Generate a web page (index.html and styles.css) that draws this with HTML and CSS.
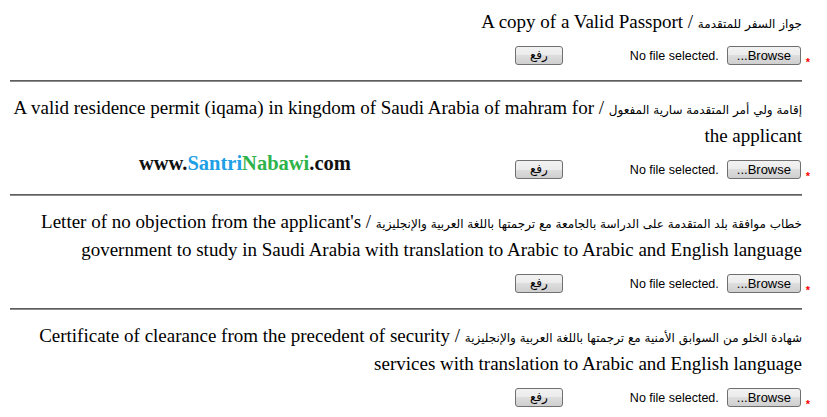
FILE: index.html
```html
<!DOCTYPE html>
<html lang="ar" dir="rtl">
<head>
    <meta charset="UTF-8">
    <title>المستندات المطلوبة</title>
    <link rel="stylesheet" href="styles.css">
</head>
<body>
    <div class="form">
        <div class="item">
            <div class="title"><span class="ar">جواز السفر للمتقدمة</span> / A copy of a Valid Passport</div>
            <div class="controls">
                <span class="req">*</span>
                <button class="btn browse">Browse...</button>
                <span class="status" dir="ltr">No file selected.</span>
                <button class="btn upload">رفع</button>
            </div>
        </div>
        <hr>
        <div class="item">
            <div class="title"><span class="ar">إقامة ولي أمر المتقدمة سارية المفعول</span> / A valid residence permit (iqama) in kingdom of Saudi Arabia of mahram for the applicant</div>
            <div class="controls">
                <span class="req">*</span>
                <button class="btn browse">Browse...</button>
                <span class="status" dir="ltr">No file selected.</span>
                <button class="btn upload">رفع</button>
            </div>
        </div>
        <hr>
        <div class="item">
            <div class="title"><span class="ar">خطاب موافقة بلد المتقدمة على الدراسة بالجامعة مع ترجمتها باللغة العربية والإنجليزية</span> / Letter of no objection from the applicant's government to study in Saudi Arabia with translation to Arabic to Arabic and English language</div>
            <div class="controls">
                <span class="req">*</span>
                <button class="btn browse">Browse...</button>
                <span class="status" dir="ltr">No file selected.</span>
                <button class="btn upload">رفع</button>
            </div>
        </div>
        <hr>
        <div class="item">
            <div class="title"><span class="ar">شهادة الخلو من السوابق الأمنية مع ترجمتها باللغة العربية والإنجليزية</span> / Certificate of clearance from the precedent of security services with translation to Arabic and English language</div>
            <div class="controls">
                <span class="req">*</span>
                <button class="btn browse">Browse...</button>
                <span class="status" dir="ltr">No file selected.</span>
                <button class="btn upload">رفع</button>
            </div>
        </div>

        <div class="watermark" dir="ltr">www.<span class="blue">Santri</span><span class="green">Nabawi</span>.com</div>
    </div>
</body>
</html>
```

FILE: styles.css
```css
body {
    margin: 8px;
    background: #fff;
    color: #000;
    font-family: "Liberation Serif", "DejaVu Serif", serif;
}
.form {
    position: relative;
    padding: 0 17px 0 2px;
}
.title {
    font-size: 19px;
    line-height: 28px;
    text-align: right;
}
.title .ar {
    font-family: "DejaVu Sans", sans-serif;
    font-size: 12px;
    line-height: 1;
}
.controls {
    display: flex;
    align-items: center;
    margin: 10px -12px 0 0;
    height: 19px;
    font-family: "Liberation Sans", Arial, sans-serif;
    font-size: 12.5px;
}
.req {
    width: 12px;
    align-self: flex-end;
    margin-bottom: -3px;
    text-align: center;
    color: #f00;
    font-size: 11px;
    font-weight: bold;
}
.btn {
    height: 19px;
    padding: 0 9px;
    border: 1px solid #707070;
    border-radius: 3px;
    background: linear-gradient(#f2f2f2, #ebebeb 50%, #dddddd 50%, #cfcfcf);
    font-family: "Liberation Sans", Arial, sans-serif;
    font-size: 13px;
    line-height: 17px;
    color: #000;
}
.browse {
    margin-right: 1px;
}
.status {
    margin-right: 8px;
}
.upload {
    width: 48px;
    margin-right: 67px;
    font-family: "DejaVu Sans", sans-serif;
    font-size: 12px;
}
hr {
    height: 0;
    margin: 15px 0 12px;
    border: 0;
    border-top: 1px solid #5e5e5e;
    border-bottom: 1px solid #8c8c8c;
}
.watermark {
    position: absolute;
    left: 131px;
    top: 144px;
    font-size: 20.5px;
    font-weight: bold;
    line-height: 22px;
    color: #111;
}
.blue {
    color: #1e9fe6;
}
.green {
    color: #2db34a;
}
```
